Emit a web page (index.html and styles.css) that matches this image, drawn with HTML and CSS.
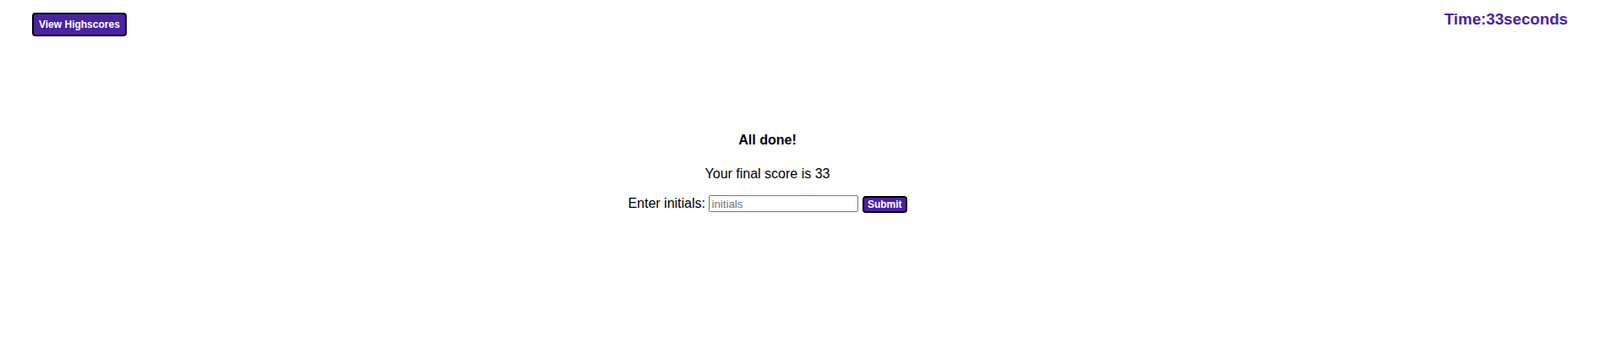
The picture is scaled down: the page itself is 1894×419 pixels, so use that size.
FILE: index.html
```html
<!DOCTYPE html>
<html lang="en">
<head>
<meta charset="utf-8">
<title>Quiz</title>
<link rel="stylesheet" href="styles.css">
</head>
<body>
<header class="top-bar">
  <button class="btn btn-highscores" type="button">View Highscores</button>
  <h3 class="timer">Time:33seconds</h3>
</header>
<main class="content">
  <h4 class="done-title">All done!</h4>
  <p class="final-score">Your final score is 33</p>
  <form class="initials-form">
    <label class="initials-label" for="initials">Enter initials:</label> <input class="initials-input" id="initials" type="text" placeholder="initials"> <button class="btn btn-submit" type="button">Submit</button>
  </form>
</main>
</body>
</html>
```

FILE: styles.css
```css
html, body {
  margin: 0;
  padding: 0;
  background: #ffffff;
}

body {
  font-family: "Liberation Sans", Arial, sans-serif;
  font-size: 16px;
  color: #000000;
}

.top-bar {
  display: flex;
  justify-content: space-between;
  align-items: flex-start;
  padding: 12px 38px 0 38px;
}

.btn {
  font-family: "Liberation Sans", Arial, sans-serif;
  font-weight: bold;
  font-size: 12px;
  line-height: 14px;
  color: #ffffff;
  background: #4a22a6;
  border: 2px solid #000000;
  border-radius: 4px;
  cursor: pointer;
}

.btn-highscores {
  margin-top: 3px;
  padding: 5px 6px;
}

.timer {
  margin: 0;
  font-size: 18.72px;
  font-weight: bold;
  color: #4a22a6;
}

.content {
  padding: 114px 77px 0 0;
  text-align: center;
}

.done-title {
  margin: 0 0 22px 0;
  font-size: 16px;
  font-weight: bold;
}

.final-score {
  margin: 0 0 16px 0;
}

.initials-form {
  margin: 0;
}

.initials-input {
  box-sizing: border-box;
  width: 177px;
  height: 20px;
  padding: 1px 2px;
  font-family: "Liberation Sans", Arial, sans-serif;
  font-size: 13.33px;
  border: 1px solid #767676;
  border-radius: 2px;
  vertical-align: baseline;
}

.initials-input::placeholder {
  color: #757575;
}

.btn-submit {
  box-sizing: border-box;
  height: 20px;
  padding: 1px 4px;
}
```
